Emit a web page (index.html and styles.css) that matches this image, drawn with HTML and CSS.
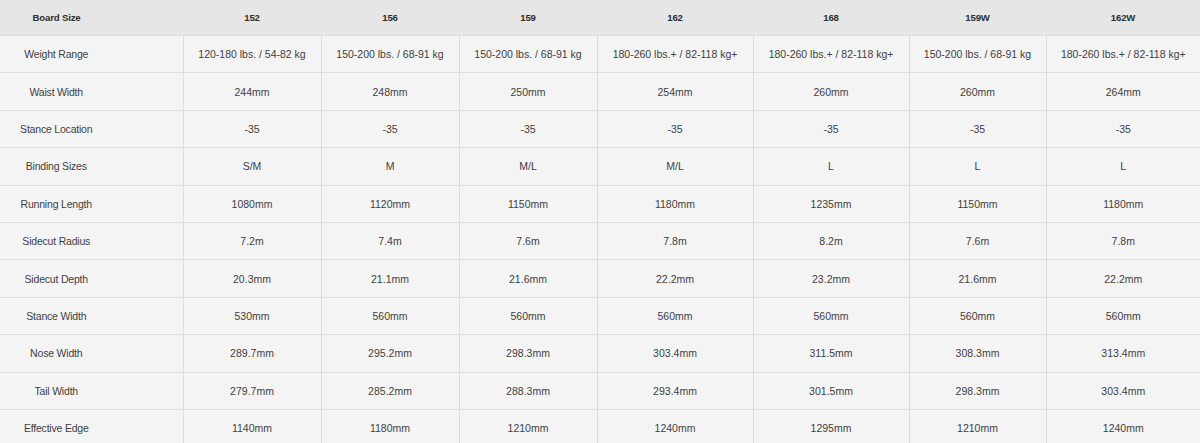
FILE: index.html
```html
<!DOCTYPE html>
<html lang="en">
<head>
<meta charset="utf-8">
<title>Board Specs</title>
<link rel="stylesheet" href="styles.css">
</head>
<body>
<table class="specs">
  <colgroup>
    <col class="c-label">
    <col class="c-narrow">
    <col class="c-narrow">
    <col class="c-narrow">
    <col class="c-wide">
    <col class="c-wide">
    <col class="c-mid">
    <col class="c-last">
  </colgroup>
  <thead>
    <tr class="head">
      <th class="label">Board Size</th>
      <th>152</th><th>156</th><th>159</th><th>162</th><th>168</th><th>159W</th><th>162W</th>
    </tr>
  </thead>
  <tbody>
    <tr><td class="label">Weight Range</td><td>120-180 lbs. / 54-82 kg</td><td>150-200 lbs. / 68-91 kg</td><td>150-200 lbs. / 68-91 kg</td><td>180-260 lbs.+ / 82-118 kg+</td><td>180-260 lbs.+ / 82-118 kg+</td><td>150-200 lbs. / 68-91 kg</td><td>180-260 lbs.+ / 82-118 kg+</td></tr>
    <tr><td class="label">Waist Width</td><td>244mm</td><td>248mm</td><td>250mm</td><td>254mm</td><td>260mm</td><td>260mm</td><td>264mm</td></tr>
    <tr><td class="label">Stance Location</td><td>-35</td><td>-35</td><td>-35</td><td>-35</td><td>-35</td><td>-35</td><td>-35</td></tr>
    <tr><td class="label">Binding Sizes</td><td>S/M</td><td>M</td><td>M/L</td><td>M/L</td><td>L</td><td>L</td><td>L</td></tr>
    <tr><td class="label">Running Length</td><td>1080mm</td><td>1120mm</td><td>1150mm</td><td>1180mm</td><td>1235mm</td><td>1150mm</td><td>1180mm</td></tr>
    <tr><td class="label">Sidecut Radius</td><td>7.2m</td><td>7.4m</td><td>7.6m</td><td>7.8m</td><td>8.2m</td><td>7.6m</td><td>7.8m</td></tr>
    <tr><td class="label">Sidecut Depth</td><td>20.3mm</td><td>21.1mm</td><td>21.6mm</td><td>22.2mm</td><td>23.2mm</td><td>21.6mm</td><td>22.2mm</td></tr>
    <tr><td class="label">Stance Width</td><td>530mm</td><td>560mm</td><td>560mm</td><td>560mm</td><td>560mm</td><td>560mm</td><td>560mm</td></tr>
    <tr><td class="label">Nose Width</td><td>289.7mm</td><td>295.2mm</td><td>298.3mm</td><td>303.4mm</td><td>311.5mm</td><td>308.3mm</td><td>313.4mm</td></tr>
    <tr><td class="label">Tail Width</td><td>279.7mm</td><td>285.2mm</td><td>288.3mm</td><td>293.4mm</td><td>301.5mm</td><td>298.3mm</td><td>303.4mm</td></tr>
    <tr><td class="label">Effective Edge</td><td>1140mm</td><td>1180mm</td><td>1210mm</td><td>1240mm</td><td>1295mm</td><td>1210mm</td><td>1240mm</td></tr>
  </tbody>
</table>
</body>
</html>
```
FILE: styles.css
```css
html, body {
  margin: 0;
  padding: 0;
  background: #f4f4f4;
}

.specs {
  width: 1200px;
  table-layout: fixed;
  border-collapse: collapse;
  border-spacing: 0;
  font-family: "Liberation Sans", Arial, Helvetica, sans-serif;
  background: #f4f4f4;
}

.c-label { width: 183px; }
.c-narrow { width: 138px; }
.c-wide { width: 156px; }
.c-mid { width: 137px; }
.c-last { width: 154px; }

.head th {
  height: 35px;
  padding: 0;
  background: #e6e6e6;
  color: #2e2e2e;
  font-size: 9.6px;
  font-weight: bold;
  text-align: center;
  vertical-align: middle;
  letter-spacing: -0.15px;
}

.specs td {
  height: 36.4px;
  padding: 0;
  border-top: 1px solid #e0e0e0;
  border-left: 1px solid #dcdcdc;
  color: #3f3f3f;
  font-size: 10.5px;
  text-align: center;
  vertical-align: middle;
  white-space: nowrap;
}

.specs th.label,
.specs td.label {
  padding-right: 70px;
  border-left: none;
}

.specs td.label {
  letter-spacing: -0.2px;
}
```
